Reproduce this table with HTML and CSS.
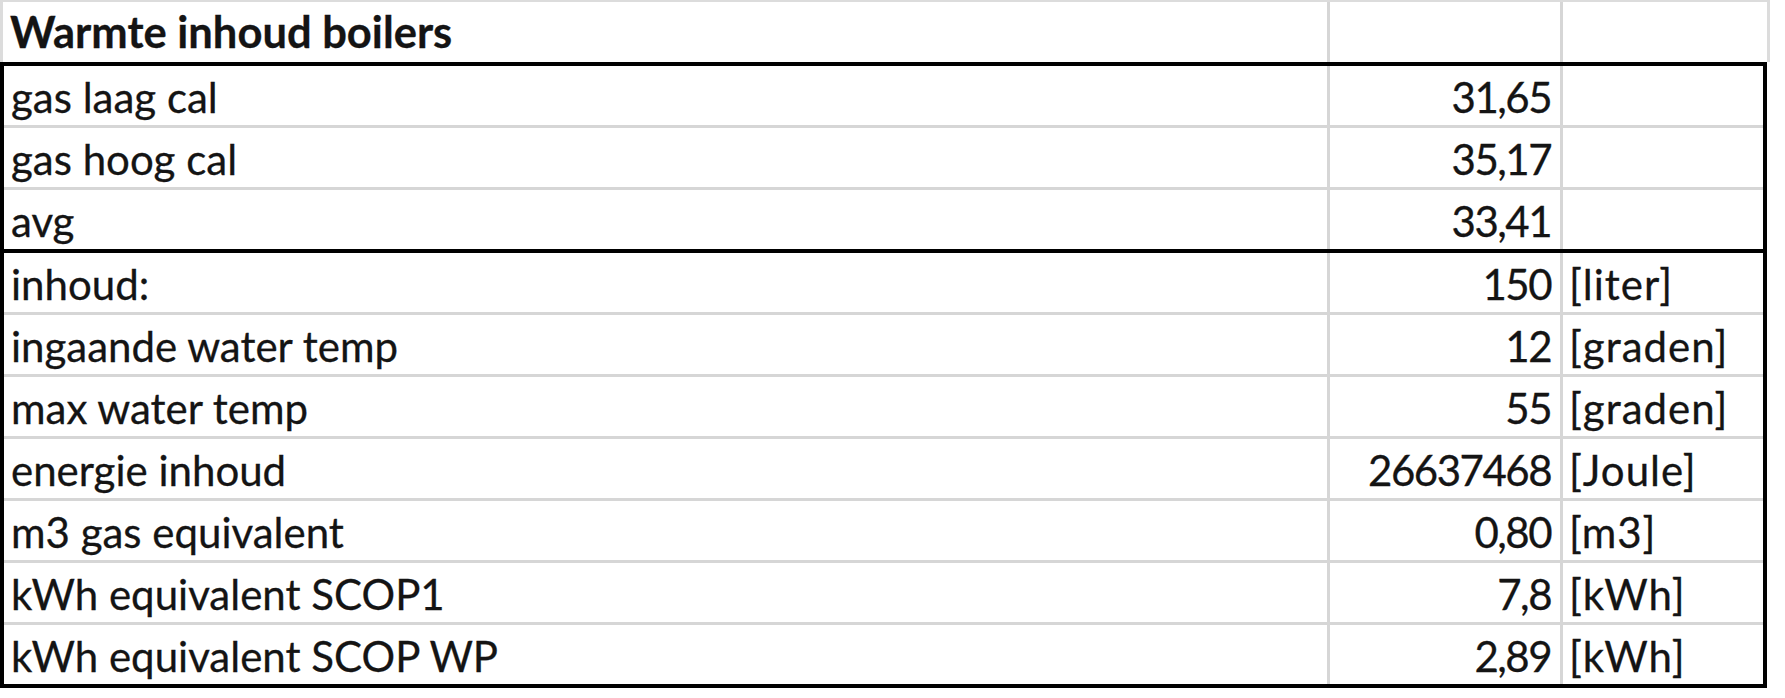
FILE: index.html
```html
<!DOCTYPE html>
<html lang="nl">
<head>
<meta charset="utf-8">
<title>Warmte inhoud boilers</title>
<link rel="stylesheet" href="styles.css">
</head>
<body>
<div class="sheet">
  <div class="row head">
    <div class="cell ca title">Warmte inhoud boilers</div>
    <div class="cell cb"></div>
    <div class="cell cc"></div>
  </div>
  <div class="block">
    <div class="row">
      <div class="cell ca">gas laag cal</div>
      <div class="cell cb num">31,65</div>
      <div class="cell cc"></div>
    </div>
    <div class="row">
      <div class="cell ca">gas hoog cal</div>
      <div class="cell cb num">35,17</div>
      <div class="cell cc"></div>
    </div>
    <div class="row">
      <div class="cell ca">avg</div>
      <div class="cell cb num">33,41</div>
      <div class="cell cc"></div>
    </div>
  </div>
  <div class="block second">
    <div class="row">
      <div class="cell ca">inhoud:</div>
      <div class="cell cb num">150</div>
      <div class="cell cc">[liter]</div>
    </div>
    <div class="row">
      <div class="cell ca">ingaande water temp</div>
      <div class="cell cb num">12</div>
      <div class="cell cc">[graden]</div>
    </div>
    <div class="row">
      <div class="cell ca">max water temp</div>
      <div class="cell cb num">55</div>
      <div class="cell cc">[graden]</div>
    </div>
    <div class="row">
      <div class="cell ca">energie inhoud</div>
      <div class="cell cb num">26637468</div>
      <div class="cell cc">[Joule]</div>
    </div>
    <div class="row">
      <div class="cell ca">m3 gas equivalent</div>
      <div class="cell cb num">0,80</div>
      <div class="cell cc">[m3]</div>
    </div>
    <div class="row">
      <div class="cell ca">kWh equivalent SCOP1</div>
      <div class="cell cb num">7,8</div>
      <div class="cell cc">[kWh]</div>
    </div>
    <div class="row">
      <div class="cell ca">kWh equivalent SCOP WP</div>
      <div class="cell cb num">2,89</div>
      <div class="cell cc">[kWh]</div>
    </div>
  </div>
</div>
</body>
</html>
```

FILE: styles.css
```css
html, body {
  margin: 0;
  padding: 0;
  background: #ffffff;
}

body {
  font-family: Lato, "Liberation Sans", sans-serif;
  font-size: 42px;
  color: #141414;
  -webkit-text-stroke: 0.3px #141414;
}

.sheet {
  width: 1770px;
  display: flex;
  flex-direction: column;
}

.row {
  display: flex;
  height: 62px;
  box-sizing: border-box;
  border-bottom: 3px solid #d6d6d6;
}

.row:last-child {
  border-bottom: none;
  height: 59px;
}

.head {
  height: 62px;
  border-top: 2px solid #dcdcdc;
  border-bottom: none;
  border-left: 3px solid #dcdcdc;
  width: 1770px;
}

.head .cc {
  width: 201px;
  border-right: 3px solid #dcdcdc;
}

.block {
  width: 1767px;
  box-sizing: border-box;
  border: 4px solid #000000;
}

.block.second {
  border-top: none;
}

.cell {
  box-sizing: border-box;
  display: flex;
  align-items: flex-end;
  padding-bottom: 7px;
  white-space: nowrap;
  line-height: 1;
}

.ca {
  width: 1330px;
  padding-left: 7px;
  border-right: 3px solid #d6d6d6;
}

.head .ca {
  width: 1327px;
}

.block .ca {
  width: 1326px;
}

.cb {
  width: 233px;
  border-right: 3px solid #d6d6d6;
}

.cc {
  flex: 1;
  padding-left: 6px;
  letter-spacing: 1px;
}

.num {
  justify-content: flex-end;
  padding-right: 9px;
  letter-spacing: -1.5px;
}

.title {
  font-weight: bold;
  font-size: 43.5px;
  padding-bottom: 9px;
}
```
